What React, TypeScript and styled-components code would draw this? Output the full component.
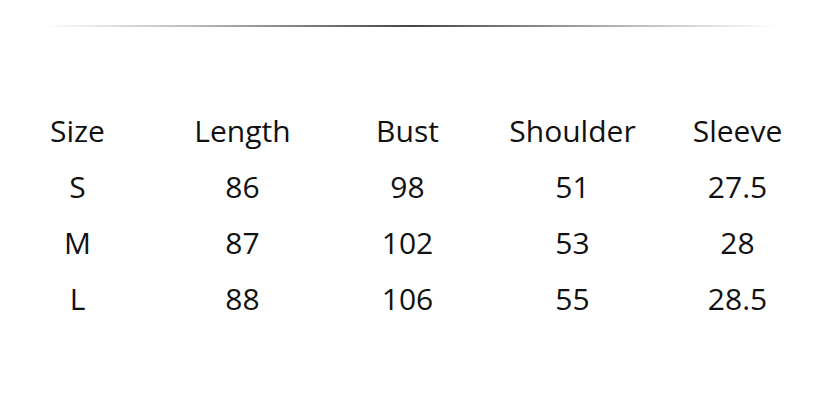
import React from "react";
import styled, { createGlobalStyle } from "styled-components";

const Global = createGlobalStyle`
  html, body { margin: 0; padding: 0; background: #ffffff; }
  body { font-family: "Open Sans", "Noto Sans", sans-serif; color: #111111; }
`;

const Page = styled.div`
  width: 833px;
  height: 401px;
  overflow: hidden;
  background: #ffffff;
  padding-top: 25px;
  box-sizing: border-box;
`;

const Divider = styled.div`
  margin: 0 55px 0 45px;
  height: 2px;
  background: linear-gradient(
    to right,
    rgba(60, 60, 60, 0) 0%,
    rgba(60, 60, 60, 0.35) 20%,
    rgba(60, 60, 60, 0.95) 50%,
    rgba(60, 60, 60, 0.35) 80%,
    rgba(60, 60, 60, 0) 100%
  );
`;

const Table = styled.div`
  margin-top: 76px;
  margin-left: -5px;
  display: grid;
  grid-template-columns: repeat(5, 165px);
  grid-auto-rows: 56px;
`;

const Cell = styled.div`
  font-size: 30px;
  line-height: 56px;
  text-align: center;
  white-space: nowrap;
  color: #111111;
`;

const headers = ["Size", "Length", "Bust", "Shoulder", "Sleeve"];
const rows = [
  ["S", "86", "98", "51", "27.5"],
  ["M", "87", "102", "53", "28"],
  ["L", "88", "106", "55", "28.5"],
];

export default function App() {
  return (
    <>
      <Global />
      <Page>
        <Divider />
        <Table>
          {headers.map((h) => (
            <Cell key={h}>{h}</Cell>
          ))}
          {rows.map((r, i) =>
            r.map((v, j) => <Cell key={`${i}-${j}`}>{v}</Cell>)
          )}
        </Table>
      </Page>
    </>
  );
}
